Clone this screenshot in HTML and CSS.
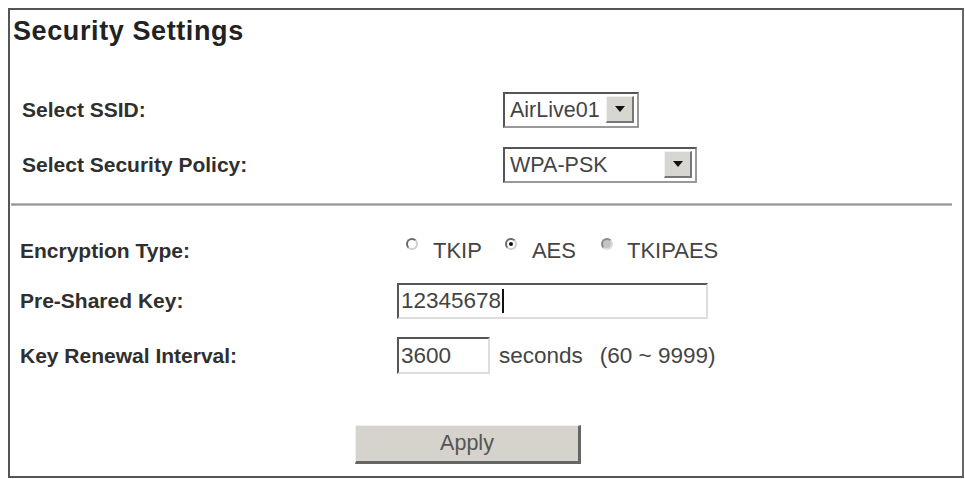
FILE: index.html
```html
<!DOCTYPE html>
<html>
<head>
<meta charset="utf-8">
<link rel="stylesheet" href="styles.css">
</head>
<body>
<div class="panel">
  <div class="title">Security Settings</div>
  <div class="sec sec1">
    <div class="row r1">
      <div class="label">Select SSID:</div>
      <div class="select s1"><span class="val">AirLive01</span><span class="btn"><span class="tri"></span></span></div>
    </div>
    <div class="row r2">
      <div class="label">Select Security Policy:</div>
      <div class="select s2"><span class="val">WPA-PSK</span><span class="btn"><span class="tri"></span></span></div>
    </div>
  </div>
  <div class="sep"></div>
  <div class="sec sec2">
    <div class="row r3">
      <div class="label">Encryption Type:</div>
      <div class="radios">
        <span class="radio"><span class="dot"></span></span><span class="rtext t1">TKIP</span>
        <span class="radio on"><span class="dot"></span></span><span class="rtext t2">AES</span>
        <span class="radio dis"><span class="dot"></span></span><span class="rtext t3">TKIPAES</span>
      </div>
    </div>
    <div class="row r4">
      <div class="label">Pre-Shared Key:</div>
      <div class="input i1"><span>12345678</span><span class="caret"></span></div>
    </div>
    <div class="row r5">
      <div class="label">Key Renewal Interval:</div>
      <div class="ctrl">
        <div class="input i2"><span>3600</span></div>
        <span class="unit">seconds</span><span class="range">(60 ~ 9999)</span>
      </div>
    </div>
  </div>
  <div class="actions"><div class="apply">Apply</div></div>
</div>
</body>
</html>
```
FILE: styles.css
```css
html, body { margin: 0; padding: 0; background: #fff; }
body { font-family: "Liberation Sans", Arial, sans-serif; color: #2a2a2a; }
.panel {
  margin: 8px 0 0 8px;
  width: 956px;
  height: 470px;
  box-sizing: border-box;
  border: 2px solid #555;
  border-right-color: #666;
}
.title {
  font-weight: bold;
  font-size: 27px;
  letter-spacing: 0.6px;
  line-height: 32px;
  padding: 5px 0 0 3px;
  color: #222;
}
.sec1 { margin-top: 45px; padding-left: 12px; }
.row { display: flex; align-items: center; }
.label { font-weight: bold; font-size: 21px; color: #2f2f2f; }
.sec1 .label { width: 481px; }
.r2 { margin-top: 19px; }
.select {
  height: 36px;
  box-sizing: border-box;
  border: 2px solid #777;
  border-top-color: #555;
  border-left-color: #555;
  border-bottom-color: #999;
  border-right-color: #999;
  display: flex;
  align-items: stretch;
  background: #fff;
}
.s1 { width: 136px; }
.s2 { width: 194px; }
.val { flex: 1; font-size: 21.5px; color: #444; padding-left: 5px; line-height: 32px; }
.btn {
  width: 28px;
  margin: 2px 3px 3px 0;
  background: #d8d6d0;
  border-right: 2px solid #777;
  border-bottom: 2px solid #777;
  border-top: 1px solid #f2f2f2;
  border-left: 1px solid #f2f2f2;
  box-sizing: border-box;
  display: flex;
  align-items: center;
  justify-content: center;
}
.tri { width: 0; height: 0; border-left: 5px solid transparent; border-right: 5px solid transparent; border-top: 6px solid #111; }
.sep {
  margin: 20px 0 0 1px;
  width: 941px;
  height: 3px;
  background: linear-gradient(#c8c8c8, #999 50%, #c8c8c8);
}
.sec2 { padding-left: 10px; margin-top: 27px; }
.sec2 .label { width: 377px; }
.r3 { height: 36px; }
.r4 { margin-top: 14px; }
.r5 { margin-top: 18px; }
.radios { display: flex; align-items: center; padding-left: 9px; font-size: 22px; color: #444; }
.radio {
  width: 12px; height: 12px;
  box-sizing: border-box;
  border-radius: 50%;
  border: 2px solid #6a6a6a;
  border-right-color: #cfcfcf;
  border-bottom-color: #cfcfcf;
  display: inline-flex; align-items: center; justify-content: center;
  margin-bottom: 14px;
}
.radio .dot { width: 4px; height: 4px; border-radius: 50%; background: transparent; flex: none; }
.radio.on .dot { background: #111; }
.radio.dis { background: #c4c4c4; border-color: #8a8a8a; border-right-color: #ddd; border-bottom-color: #ddd; }
.t1 { margin-left: 15px; margin-right: 23px; }
.t2 { margin-left: 15px; margin-right: 25px; }
.t3 { margin-left: 14px; }
.input {
  box-sizing: border-box;
  border: 2px solid #999;
  border-top-color: #555;
  border-left-color: #555;
  border-right-color: #ddd;
  border-bottom-color: #ddd;
  font-size: 22.5px;
  color: #444;
  padding-left: 2px;
  display: flex;
  align-items: center;
}
.i1 { width: 311px; height: 36px; }
.caret { width: 2px; height: 24px; background: #111; margin-left: 1px; }
.i2 { width: 93px; height: 37px; }
.ctrl { display: flex; align-items: center; font-size: 22.5px; color: #444; }
.unit { margin-left: 9px; }
.range { margin-left: 17px; }
.actions { margin-top: 51px; padding-left: 345px; }
.apply {
  width: 226px; height: 39px;
  box-sizing: border-box;
  background: #d6d3cc;
  border-top: 1px solid #f0f0f0;
  border-left: 1px solid #f0f0f0;
  border-right: 3px solid #666;
  border-bottom: 3px solid #666;
  text-align: center;
  font-size: 21.5px;
  line-height: 34px;
  color: #555;
}
```
